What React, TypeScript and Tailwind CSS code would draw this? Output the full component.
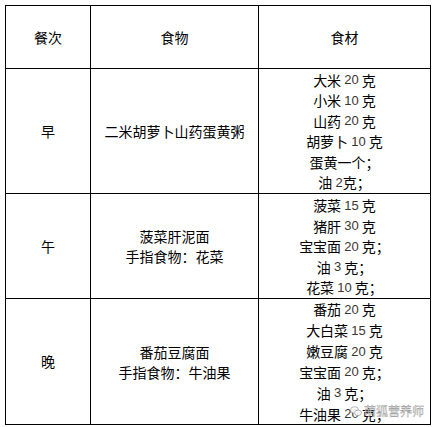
import React from 'react';

type Meal = {
  name: string;
  food: string[];
  items: string[];
  h: string;
  lh: string;
};

const meals: Meal[] = [
  {
    name: '早',
    food: ['二米胡萝卜山药蛋黄粥'],
    items: ['大米 20 克', '小米 10 克', '山药 20 克', '胡萝卜 10 克', '蛋黄一个；', '油 2克；'],
    h: 'h-[125px]',
    lh: 'h-[20.6px]',
  },
  {
    name: '午',
    food: ['菠菜肝泥面', '手指食物：花菜'],
    items: ['菠菜 15 克', '猪肝 30 克', '宝宝面 20 克；', '油 3 克；', '花菜 10 克；'],
    h: 'h-[105px]',
    lh: 'h-[20.5px]',
  },
  {
    name: '晚',
    food: ['番茄豆腐面', '手指食物：牛油果'],
    items: ['番茄 20 克', '大白菜 15 克', '嫩豆腐 20 克', '宝宝面 20 克；', '油 3 克；', '牛油果 20 克；'],
    h: 'h-[126px]',
    lh: 'h-[21.3px]',
  },
];

// numbers in the source are set in a lighter latin face
const Line = ({ text, h }: { text: string; h: string }) => (
  <div className={`${h} flex items-center justify-center whitespace-pre leading-none`}>
    {text.split(/(\d+)/).map((part, i) =>
      /^\d+$/.test(part) ? (
        <span key={i} className="font-['Liberation_Sans',sans-serif] text-[13px] text-[#3b3530] leading-none">
          {part}
        </span>
      ) : (
        <span key={i} className="leading-none">{part}</span>
      )
    )}
  </div>
);

const cell = 'flex flex-col items-center justify-center text-center border-r border-b border-black';

export default function App() {
  return (
    <div className="relative w-[435px] h-[427px] bg-white pt-[5px] pl-[5px] font-['Noto_Sans_CJK_SC',sans-serif] text-[14px] text-black">
      <div className="grid grid-cols-[85px_168px_172px] w-[426px] border-l border-t border-black">
        <div className={`${cell} h-[63px]`}>餐次</div>
        <div className={`${cell} h-[63px]`}>食物</div>
        <div className={`${cell} h-[63px]`}>食材</div>

        {meals.map((m) => (
          <React.Fragment key={m.name}>
            <div className={`${cell} ${m.h}`}>{m.name}</div>
            <div className={`${cell} ${m.h} leading-[20px]`}>
              {m.food.map((f) => (
                <div key={f}>{f}</div>
              ))}
            </div>
            <div className={`${cell} ${m.h}`}>
              {m.items.map((t) => (
                <Line key={t} text={t} h={m.lh} />
              ))}
            </div>
          </React.Fragment>
        ))}
      </div>

      {/* watermark */}
      <div className="absolute left-[350px] top-[404px] flex items-center gap-[2px] opacity-90">
        <svg width="12" height="11" viewBox="0 0 12 11" fill="none" stroke="#9a9a9a" strokeWidth="0.8">
          <ellipse cx="4.5" cy="4" rx="4" ry="3.3" fill="#ffffff" />
          <ellipse cx="8" cy="6.8" rx="3.4" ry="2.8" fill="#ffffff" />
        </svg>
        <span className="text-[12px] leading-[14px] text-white [-webkit-text-stroke:0.4px_#8a8a8a]">萌狐营养师</span>
      </div>
    </div>
  );
}
